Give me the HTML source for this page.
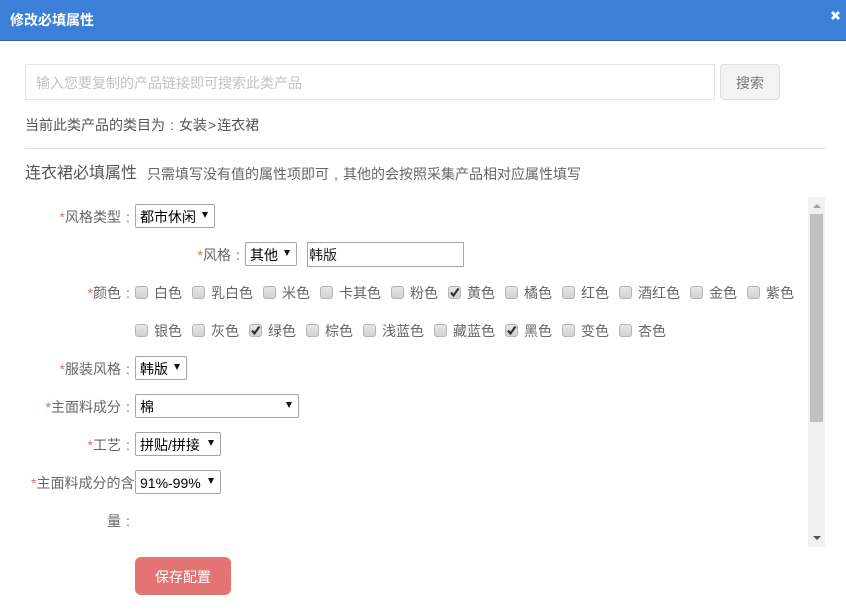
<!DOCTYPE html>
<html lang="zh">
<head>
<meta charset="utf-8">
<title>修改必填属性</title>
<style>
html,body{margin:0;padding:0;background:#fff;}
body{width:846px;height:615px;position:relative;overflow:hidden;font-family:"Liberation Sans","Noto Sans CJK SC",sans-serif;font-size:14px;color:#555;}
.a{position:absolute;white-space:nowrap;}
.t{position:absolute;white-space:nowrap;line-height:20px;height:20px;}
.lb{position:absolute;white-space:nowrap;line-height:20px;height:20px;text-align:right;color:#666;}
.lb i{font-style:normal;color:#d9736f;}
b.k{font-weight:normal;display:inline-block;width:14px;text-align:center;}
.sel{position:absolute;box-sizing:border-box;height:24px;border:1px solid #a6a6a6;border-radius:2px;background:#fff;color:#000;line-height:24px;padding-left:4px;white-space:nowrap;}
.sel:after{content:"";position:absolute;right:6px;top:7px;width:0;height:0;border-left:3.5px solid transparent;border-right:3.5px solid transparent;border-top:6px solid #111;}
.c{position:absolute;box-sizing:border-box;width:13px;height:13px;border:1px solid #b5b5b5;border-radius:3px;background:linear-gradient(#e6e6e6,#d2d2d2);}
.c svg{position:absolute;left:0;top:0;}
.ct{position:absolute;white-space:nowrap;line-height:20px;height:20px;color:#666;}
</style>
</head>
<body>
<div class="a" style="left:0;top:0;width:846px;height:40px;background:#3b7fd9;border-bottom:1px solid #2c5f9e;"></div>
<div class="t" style="left:10px;top:10px;color:#fff;font-weight:bold;font-size:14px;">修改必填属性</div>
<svg class="a" style="left:830px;top:10px;" width="11" height="11" viewBox="0 0 11 11"><path d="M2 2L9 9M9 2L2 9" stroke="#fff" stroke-width="2.8" fill="none"/></svg>

<div class="a" style="left:25px;top:64px;width:690px;height:36px;box-sizing:border-box;border:1px solid #e4e4e4;background:#fff;"></div>
<div class="t" style="left:36px;top:73px;color:#c2c2c2;">输入您要复制的产品链接即可搜索此类产品</div>
<div class="a" style="left:720px;top:64px;width:60px;height:36px;box-sizing:border-box;border:1px solid #dedede;border-radius:4px;background:#f3f3f3;color:#777;text-align:center;line-height:36px;">搜索</div>

<div class="t" style="left:25px;top:115px;color:#555;">当前此类产品的类目为<b class="k">:</b>女装<span style="margin:0 1px;">&gt;</span>连衣裙</div>
<div class="a" style="left:25px;top:148px;width:800px;height:1px;background:#dcdcdc;"></div>
<div class="t" style="left:25px;top:164px;font-size:16px;color:#555;">连衣裙必填属性</div>
<div class="t" style="left:147px;top:164px;color:#666;">只需填写没有值的属性项即可<b class="k">,</b>其他的会按照采集产品相对应属性填写</div>

<!-- scrollbar -->
<div class="a" style="left:808px;top:197px;width:17px;height:350px;background:#f1f1f1;"></div>
<div class="a" style="left:810px;top:214px;width:13px;height:208px;background:#c1c1c1;"></div>
<div class="a" style="left:813px;top:204px;width:0;height:0;border-left:4px solid transparent;border-right:4px solid transparent;border-bottom:4px solid #a3a3a3;"></div>
<div class="a" style="left:813px;top:536px;width:0;height:0;border-left:4px solid transparent;border-right:4px solid transparent;border-top:4px solid #505050;"></div>

<!-- row labels -->
<div class="lb" style="right:711px;top:207px;"><i>*</i>风格类型<b class="k">:</b></div>
<div class="sel" style="left:135px;top:204px;width:80px;">都市休闲</div>

<div class="lb" style="right:601px;top:245px;"><i>*</i>风格<b class="k">:</b></div>
<div class="sel" style="left:245px;top:242px;width:52px;">其他</div>
<div class="a" style="left:307px;top:242px;width:157px;height:25px;box-sizing:border-box;border:1px solid #a6a6a6;color:#222;line-height:24px;padding-left:1px;">韩版</div>

<div class="lb" style="right:711px;top:283px;"><i>*</i>颜色<b class="k">:</b></div>

<div class="c" style="left:135px;top:286px;"></div><div class="ct" style="left:154px;top:283px;">白色</div>
<div class="c" style="left:192px;top:286px;"></div><div class="ct" style="left:211px;top:283px;">乳白色</div>
<div class="c" style="left:263px;top:286px;"></div><div class="ct" style="left:282px;top:283px;">米色</div>
<div class="c" style="left:320px;top:286px;"></div><div class="ct" style="left:339px;top:283px;">卡其色</div>
<div class="c" style="left:391px;top:286px;"></div><div class="ct" style="left:410px;top:283px;">粉色</div>
<div class="c" style="left:448px;top:286px;"><svg width="11" height="11" viewBox="0 0 11 11"><path d="M2 5.5L4.5 8.5L9.5 1.5" stroke="#333" stroke-width="2.2" fill="none"/></svg></div><div class="ct" style="left:467px;top:283px;">黄色</div>
<div class="c" style="left:505px;top:286px;"></div><div class="ct" style="left:524px;top:283px;">橘色</div>
<div class="c" style="left:562px;top:286px;"></div><div class="ct" style="left:581px;top:283px;">红色</div>
<div class="c" style="left:619px;top:286px;"></div><div class="ct" style="left:638px;top:283px;">酒红色</div>
<div class="c" style="left:690px;top:286px;"></div><div class="ct" style="left:709px;top:283px;">金色</div>
<div class="c" style="left:747px;top:286px;"></div><div class="ct" style="left:766px;top:283px;">紫色</div>

<div class="c" style="left:135px;top:324px;"></div><div class="ct" style="left:154px;top:321px;">银色</div>
<div class="c" style="left:192px;top:324px;"></div><div class="ct" style="left:211px;top:321px;">灰色</div>
<div class="c" style="left:249px;top:324px;"><svg width="11" height="11" viewBox="0 0 11 11"><path d="M2 5.5L4.5 8.5L9.5 1.5" stroke="#333" stroke-width="2.2" fill="none"/></svg></div><div class="ct" style="left:268px;top:321px;">绿色</div>
<div class="c" style="left:306px;top:324px;"></div><div class="ct" style="left:325px;top:321px;">棕色</div>
<div class="c" style="left:363px;top:324px;"></div><div class="ct" style="left:382px;top:321px;">浅蓝色</div>
<div class="c" style="left:434px;top:324px;"></div><div class="ct" style="left:453px;top:321px;">藏蓝色</div>
<div class="c" style="left:505px;top:324px;"><svg width="11" height="11" viewBox="0 0 11 11"><path d="M2 5.5L4.5 8.5L9.5 1.5" stroke="#333" stroke-width="2.2" fill="none"/></svg></div><div class="ct" style="left:524px;top:321px;">黑色</div>
<div class="c" style="left:562px;top:324px;"></div><div class="ct" style="left:581px;top:321px;">变色</div>
<div class="c" style="left:619px;top:324px;"></div><div class="ct" style="left:638px;top:321px;">杏色</div>

<div class="lb" style="right:711px;top:359px;"><i>*</i>服装风格<b class="k">:</b></div>
<div class="sel" style="left:135px;top:356px;width:52px;">韩版</div>

<div class="lb" style="right:711px;top:397px;"><i>*</i>主面料成分<b class="k">:</b></div>
<div class="sel" style="left:135px;top:394px;width:164px;">棉</div>

<div class="lb" style="right:711px;top:435px;"><i>*</i>工艺<b class="k">:</b></div>
<div class="sel" style="left:135px;top:432px;width:86px;">拼贴/拼接</div>

<div class="lb" style="left:31px;top:473px;"><i>*</i>主面料成分的含</div>
<div class="sel" style="left:135px;top:470px;width:86px;">91%-99%</div>
<div class="lb" style="right:711px;top:511px;">量<b class="k">:</b></div>

<div class="a" style="left:135px;top:557px;width:96px;height:38px;border-radius:6px;background:#e27474;color:#fff;text-align:center;line-height:40px;">保存配置</div>
</body>
</html>
